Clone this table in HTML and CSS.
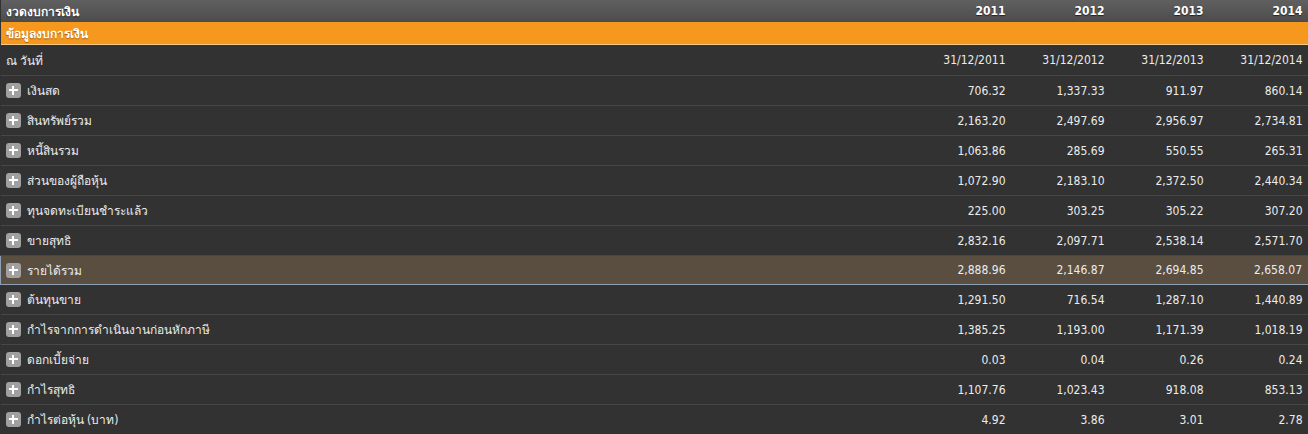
FILE: index.html
```html
<!DOCTYPE html>
<html lang="th">
<head>
<meta charset="utf-8">
<link rel="stylesheet" href="styles.css">
</head>
<body>
<table class="fin">
  <colgroup>
    <col class="c-label"><col class="c-num"><col class="c-num"><col class="c-num"><col class="c-num">
  </colgroup>
  <thead>
    <tr class="head">
      <th class="lbl">งวดงบการเงิน</th><th>2011</th><th>2012</th><th>2013</th><th>2014</th>
    </tr>
  </thead>
  <tbody>
    <tr class="section"><td colspan="5">ข้อมูลงบการเงิน</td></tr>
    <tr class="row date"><td class="lbl">ณ วันที่</td><td>31/12/2011</td><td>31/12/2012</td><td>31/12/2013</td><td>31/12/2014</td></tr>
    <tr class="row"><td class="lbl"><span class="plus"></span>เงินสด</td><td>706.32</td><td>1,337.33</td><td>911.97</td><td>860.14</td></tr>
    <tr class="row"><td class="lbl"><span class="plus"></span>สินทรัพย์รวม</td><td>2,163.20</td><td>2,497.69</td><td>2,956.97</td><td>2,734.81</td></tr>
    <tr class="row"><td class="lbl"><span class="plus"></span>หนี้สินรวม</td><td>1,063.86</td><td>285.69</td><td>550.55</td><td>265.31</td></tr>
    <tr class="row"><td class="lbl"><span class="plus"></span>ส่วนของผู้ถือหุ้น</td><td>1,072.90</td><td>2,183.10</td><td>2,372.50</td><td>2,440.34</td></tr>
    <tr class="row"><td class="lbl"><span class="plus"></span>ทุนจดทะเบียนชำระแล้ว</td><td>225.00</td><td>303.25</td><td>305.22</td><td>307.20</td></tr>
    <tr class="row"><td class="lbl"><span class="plus"></span>ขายสุทธิ</td><td>2,832.16</td><td>2,097.71</td><td>2,538.14</td><td>2,571.70</td></tr>
    <tr class="row hl"><td class="lbl"><span class="plus"></span>รายได้รวม</td><td>2,888.96</td><td>2,146.87</td><td>2,694.85</td><td>2,658.07</td></tr>
    <tr class="row"><td class="lbl"><span class="plus"></span>ต้นทุนขาย</td><td>1,291.50</td><td>716.54</td><td>1,287.10</td><td>1,440.89</td></tr>
    <tr class="row"><td class="lbl"><span class="plus"></span>กำไรจากการดำเนินงานก่อนหักภาษี</td><td>1,385.25</td><td>1,193.00</td><td>1,171.39</td><td>1,018.19</td></tr>
    <tr class="row"><td class="lbl"><span class="plus"></span>ดอกเบี้ยจ่าย</td><td>0.03</td><td>0.04</td><td>0.26</td><td>0.24</td></tr>
    <tr class="row"><td class="lbl"><span class="plus"></span>กำไรสุทธิ</td><td>1,107.76</td><td>1,023.43</td><td>918.08</td><td>853.13</td></tr>
    <tr class="row"><td class="lbl"><span class="plus"></span>กำไรต่อหุ้น (บาท)</td><td>4.92</td><td>3.86</td><td>3.01</td><td>2.78</td></tr>
  </tbody>
</table>
</body>
</html>
```

FILE: styles.css
```css
html, body {
  margin: 0;
  padding: 0;
  background: #323232;
}
body {
  font-family: "DejaVu Sans Condensed", "DejaVu Sans", "Liberation Sans", sans-serif;
  font-size: 12px;
  color: #ececec;
}
.fin {
  width: 1308px;
  border-collapse: collapse;
  table-layout: fixed;
}
.c-label { width: 912px; }
.c-num { width: 99px; }
.fin th, .fin td {
  padding: 0 6px 0 0;
  text-align: right;
  white-space: nowrap;
}
.fin .lbl { text-align: left; padding-left: 5px; }
.head th {
  height: 22px;
  background: linear-gradient(#606060, #4c4c4c);
  color: #fff;
  font-weight: bold;
  text-shadow: 0 1px 1px #222;
}
.section td {
  height: 22px;
  background: #f7981e;
  border-bottom: 1px solid #f4c98c;
  color: #fff;
  font-weight: bold;
  text-align: left;
  padding-left: 5px;
  text-shadow: 0 1px 1px #a05a00;
}
.row td {
  height: 29px;
  background: #323232;
  border-bottom: 1px solid #474747;
}
.row.date td { height: 30px; }
.row.hl td {
  background: #5a4e41;
  border-top: 1px solid #8ea1b4;
  border-bottom: 1px solid #8ea1b4;
  height: 28px;
}
.row.hl td:first-child { border-left: 1px solid #8ea1b4; }
.row.hl td:last-child { border-right: 1px solid #8ea1b4; }
.plus {
  display: inline-block;
  position: relative;
  width: 15px;
  height: 15px;
  border-radius: 3px;
  background: #a0a0a0;
  vertical-align: -3px;
  margin-right: 6px;
}
.plus::before, .plus::after {
  content: "";
  position: absolute;
  background: #fff;
}
.plus::before { left: 3px; right: 3px; top: 6px; height: 2px; }
.plus::after { top: 3px; bottom: 3px; left: 6px; width: 2px; }
```
